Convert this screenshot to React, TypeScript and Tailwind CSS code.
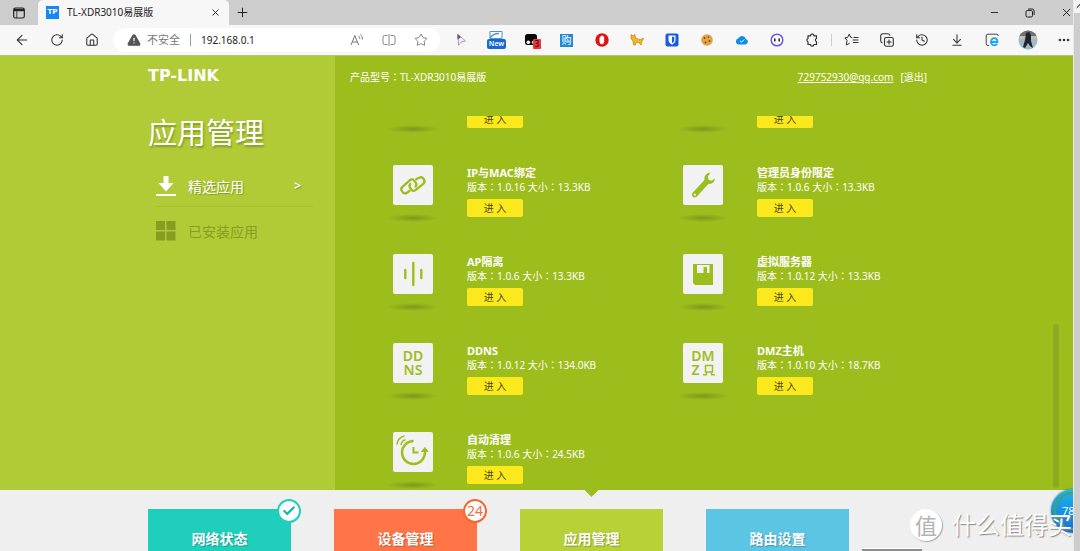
import React from 'react';
import {
  AlertTriangle,
  ArrowDownToLine,
  ArrowLeft,
  Check,
  ChevronUp,
  History,
  House,
  Minus,
  MoreHorizontal,
  Plus,
  RotateCw,
  Star,
  X,
} from 'lucide-react';

interface RouterApp {
  id: string;
  name: string;
  version: string;
  size: string;
  icon: React.ReactNode;
}

interface NavTile {
  id: string;
  label: string;
  color: string;
  active?: boolean;
  badge?: React.ReactNode;
}

const LinkIcon = () => (
  <svg viewBox="0 0 40 40" className="h-10 w-10" fill="none" stroke="#9dbd1d" strokeWidth="2.300" strokeLinecap="round" strokeLinejoin="round">
    <path d="M16.500 26l-2.600 1.800c-1.500 1.100-3.200.8-4.200-.6l-.9-1.300c-1-1.500-.7-3 .6-4.100l7.600-6.600c1.400-1.200 3.100-1 4.200.4l1.500 2c.9 1.300.9 2.700-.1 3.900" />
    <path d="M23.200 14.300l2.900-1.500c1.600-.9 3.300-.6 4.200.8l.8 1.300c.9 1.500.5 3-.9 4l-7.700 6.200c-1.500 1.100-3.100.8-4.200-.6l-1.200-1.700c-.9-1.300-.8-2.600.2-3.800" />
  </svg>
);

const WrenchIcon = () => (
  <svg viewBox="0 0 40 40" className="h-10 w-10">
    <path
      fill="#9dbd1d"
      d="M27.500 7.500c-4 .2-6.800 3.600-6 7.600L9.800 27.500c-1.300 1.400-1.200 3.200 0 4.300 1.200 1.100 3 1 4.200-.3L25.500 18.800c3.200.6 6-1.400 6.300-5.300l-3.300 2.200-3-.9-.6-3.200z"
    />
    <circle cx="11.800" cy="29.600" r="1.200" fill="#f2f2f2" />
  </svg>
);

const IsolationIcon = () => (
  <svg viewBox="0 0 40 40" className="h-10 w-10" stroke="#9dbd1d" strokeWidth="2.400" strokeLinecap="round">
    <path d="M12.300 16v8M20.300 9v22M28.300 16v8" />
  </svg>
);

const FloppyIcon = () => (
  <svg viewBox="0 0 40 40" className="h-10 w-10">
    <path d="M10 10h20v21H12l-2-2z" fill="#9dbd1d" />
    <path d="M14 11h12.500v8H14z" fill="#f2f2f2" />
    <path d="M20.500 13h3.500v6h-3.500z" fill="#9dbd1d" />
  </svg>
);

const CleanIcon = () => (
  <svg viewBox="0 0 40 40" className="h-10 w-10" fill="none" stroke="#9dbd1d" strokeWidth="2.400">
    <path d="M20.500 9a11.500 11.500 0 1 0 11.500 11.500V19" />
    <path d="M28.500 19.500l3.500-4 3 4z" fill="#9dbd1d" strokeWidth="1" />
    <path d="M20.500 15v5.500h5" strokeWidth="2" />
    <path d="M4 12.500c.5-4.500 3-7.500 7.500-8.500M8 13c.4-2.800 2-4.600 4.500-5.200" strokeWidth="1.500" />
  </svg>
);

const apps: RouterApp[] = [
  { id: 'a', name: '', version: '', size: '', icon: null },
  { id: 'b', name: '', version: '', size: '', icon: null },
  { id: 'ipmac', name: 'IP与MAC绑定', version: '1.0.16', size: '13.3KB', icon: <LinkIcon /> },
  { id: 'admin', name: '管理员身份限定', version: '1.0.6', size: '13.3KB', icon: <WrenchIcon /> },
  { id: 'ap', name: 'AP隔离', version: '1.0.6', size: '13.3KB', icon: <IsolationIcon /> },
  { id: 'vserver', name: '虚拟服务器', version: '1.0.12', size: '13.3KB', icon: <FloppyIcon /> },
  {
    id: 'ddns',
    name: 'DDNS',
    version: '1.0.12',
    size: '134.0KB',
    icon: (
      <span className="flex flex-col items-center text-[14px] leading-[14px] font-semibold text-[#9dbd1d]">
        <span>DD</span>
        <span>NS</span>
      </span>
    ),
  },
  {
    id: 'dmz',
    name: 'DMZ主机',
    version: '1.0.10',
    size: '18.7KB',
    icon: (
      <span className="flex flex-col items-center text-[14px] leading-[14px] font-semibold text-[#9dbd1d]">
        <span>DM</span>
        <span className="flex items-center gap-[3px]">
          Z
          <svg viewBox="0 0 12 12" className="h-3 w-3" fill="none" stroke="#9dbd1d" strokeWidth="1.500">
            <path d="M2.500 1.500h7v6.500h-7zM0 10.700h4M8 10.700h4M3.500 8v2.700M8.500 8v2.700" />
          </svg>
        </span>
      </span>
    ),
  },
  { id: 'clean', name: '自动清理', version: '1.0.6', size: '24.5KB', icon: <CleanIcon /> },
];

const tiles: NavTile[] = [
  {
    id: 'network',
    label: '网络状态',
    color: 'bg-[#1fcfbc]',
    badge: (
      <span className="absolute -top-2.5 -right-2.5 flex h-6 w-6 items-center justify-center rounded-full border-2 border-[#1fcfbc] bg-white text-[#1cb9a8]">
        <Check className="h-3.5 w-3.5" strokeWidth={4} />
      </span>
    ),
  },
  {
    id: 'devices',
    label: '设备管理',
    color: 'bg-[#ff7547]',
    badge: (
      <span className="absolute -top-2.5 -right-2.5 flex h-6 w-6 items-center justify-center rounded-full border-2 border-[#f9652f] bg-white text-[14px] leading-none font-normal text-[#f0703f]">
        24
      </span>
    ),
  },
  { id: 'apps', label: '应用管理', color: 'bg-[#b8d137]', active: true },
  { id: 'route', label: '路由设置', color: 'bg-[#5cc5e4]' },
];

// Full-width colon, centred in its cell
const Colon = () => <span className="font-['Noto_Sans_CJK_TC',sans-serif]">：</span>;

const BarButton: React.FC<{ label: string; children: React.ReactNode }> = ({ label, children }) => (
  <button aria-label={label} className="flex h-6 w-[35px] shrink-0 items-center justify-center">
    {children}
  </button>
);

const TabStrip = () => (
  <div className="flex h-[25px] shrink-0 items-center overflow-hidden bg-[#cdcdcd] text-[#222]">
    <button aria-label="标签页操作" className="flex w-[38px] shrink-0 justify-center">
      <svg viewBox="0 0 12 12" className="h-3 w-3" fill="none" stroke="#222" strokeWidth="1.200">
        <rect x=".7" y="1" width="10.600" height="10" rx="1.800" />
        <path d="M1 3h10" strokeWidth="2.400" />
        <path d="M3.800 4v7" strokeWidth=".8" />
      </svg>
    </button>
    <div className="flex h-full w-[191px] items-center rounded-t-[5px] bg-[#f7f7f7] pr-2 pl-2">
      <span className="flex h-[13px] w-[13px] items-center justify-center bg-[#1486fa] font-['DejaVu_Sans',sans-serif] text-[7px] leading-none font-bold text-white">
        TP
      </span>
      <span className="ml-2 flex-1 text-[10px] whitespace-nowrap">TL-XDR3010易展版</span>
      <button aria-label="关闭标签页"><X className="h-[11px] w-[11px]" /></button>
    </div>
    <button aria-label="新建标签页" className="ml-1.5"><Plus className="h-[15px] w-[15px]" strokeWidth={1.600} /></button>
    <div className="ml-auto flex shrink-0 items-center gap-[25px]">
      <button aria-label="最小化"><Minus className="h-[11px] w-[11px]" /></button>
      <button aria-label="还原">
        <svg viewBox="0 0 10 10" className="h-[10px] w-[10px]" fill="none" stroke="#222">
          <rect x="1" y="2.500" width="6.500" height="6.500" rx="1.300" />
          <path d="M3 1h4.200A1.900 1.900 0 0 1 9.100 2.900V7" />
        </svg>
      </button>
      <button aria-label="关闭"><X className="h-[13px] w-[13px]" strokeWidth={1.800} /></button>
    </div>
  </div>
);

const Extensions = () => (
  <>
    <BarButton label="指针">
      <svg viewBox="0 0 14 14" className="h-3.5 w-3.5">
        <path d="M3 1.500l7.500 6.500-4 .6L3.500 12.500z" fill="#f3f3f3" stroke="#a9a4ae" />
        <path d="M2.300 1l3.700 3-3.400 2.700z" fill="#7b3f9d" />
      </svg>
    </BarButton>
    <BarButton label="截图">
      <span className="flex flex-col items-center">
        <svg viewBox="0 0 14 8" className="h-2 w-3.5">
          <path d="M1 .5h12v7H1z" fill="#fff" stroke="#4a97c5" />
          <path d="M1 7c2-3 5-4.500 9-4.500" fill="none" stroke="#4a97c5" strokeWidth="1.500" />
        </svg>
        <span className="rounded-[2px] bg-[#1769d2] px-[2px] text-[7px] leading-[10px] font-semibold text-white">New</span>
      </span>
    </BarButton>
    <BarButton label="脚本管理">
      <span className="relative h-3.5 w-3.5">
        <svg viewBox="0 0 14 14" className="h-3.5 w-3.5">
          <rect x="0" y="1" width="12" height="11" rx="2.500" fill="#0a0a0a" />
          <circle cx="3.300" cy="9.200" r="1.800" fill="#fff" />
          <circle cx="8.700" cy="9.200" r="1.800" fill="#fff" />
        </svg>
        <span className="absolute top-1.5 left-2 rounded-[1px] bg-[#f2353b] px-[2px] text-[8px] leading-[10px] text-black">3</span>
      </span>
    </BarButton>
    <BarButton label="购物">
      <span className="flex h-[13px] w-[13px] items-center justify-center bg-[#2289d8] text-[10px] leading-none text-white">购</span>
    </BarButton>
    <BarButton label="广告拦截">
      <svg viewBox="0 0 14 14" className="h-3.5 w-3.5">
        <circle cx="7" cy="7" r="6.700" fill="#df1212" />
        <path d="M4.500 5c0-1 1-1 1 0V3.500c0-1 1.200-1 1.200 0V3c0-1 1.200-1 1.200 0v1c0-1 1.300-1 1.300 0v4c0 2-1 3.300-2.500 3.300S4.500 10 4.500 8z" fill="#fff" />
      </svg>
    </BarButton>
    <BarButton label="猫">
      <svg viewBox="0 0 14 14" className="h-3.5 w-3.5">
        <path d="M1 1.500l1.300 1h1.400L5 1.500 5.500 5l4.500 1.500 2-.3.500-1.200 1.300.4L12 8l-.5 3.500H10l-.5-2-4 .2V12h-2L3 8.500 1 5.500z" fill="#efb526" stroke="#b97a19" strokeWidth=".6" />
      </svg>
    </BarButton>
    <BarButton label="密码管理">
      <svg viewBox="0 0 14 14" className="h-3.5 w-3.5">
        <rect x=".5" y=".5" width="13" height="13" rx="2" fill="#175ddc" />
        <path d="M3.500 2.500h7v4.500c0 2.300-1.500 3.700-3.500 4.700-2-1-3.500-2.400-3.500-4.700z" fill="#fff" />
        <path d="M7 3.700h2.300V7c0 1.500-1 2.500-2.300 3.200z" fill="#175ddc" />
      </svg>
    </BarButton>
    <BarButton label="Cookie">
      <svg viewBox="0 0 14 14" className="h-3.5 w-3.5">
        <circle cx="7" cy="7" r="5.800" fill="#e5a04a" />
        <g fill="#7b4519">
          <circle cx="4.500" cy="5" r=".9" /><circle cx="8.500" cy="4" r=".8" /><circle cx="9.500" cy="8" r=".9" /><circle cx="5.500" cy="9.500" r=".9" />
        </g>
      </svg>
    </BarButton>
    <BarButton label="云盘">
      <svg viewBox="0 0 14 14" className="h-3.5 w-3.5">
        <path d="M3.500 11.500a3 3 0 0 1-.3-5.900 4 4 0 0 1 7.600.4 2.800 2.800 0 0 1-.3 5.500z" fill="#0c8ee8" />
        <path d="M5 7.800l1.500 1.400 2.700-2.700" fill="none" stroke="#fff" />
      </svg>
    </BarButton>
    <BarButton label="助手">
      <svg viewBox="0 0 14 14" className="h-3.5 w-3.5">
        <circle cx="7" cy="7" r="5.800" fill="#fff" stroke="#6b54f0" strokeWidth="1.500" />
        <path d="M4.800 6v2M9.200 6v2" stroke="#222" strokeWidth="1.500" strokeLinecap="round" />
      </svg>
    </BarButton>
    <BarButton label="扩展">
      <svg viewBox="0 0 14 14" className="h-3.5 w-3.5" fill="none" stroke="#333" strokeWidth="1.200" strokeLinejoin="round">
        <path d="M3 2.800h2.500a1.700 1.700 0 0 1 3.400 0h2.600v2.700a1.700 1.700 0 0 0 0 3.200v2.800H8.900a1.700 1.700 0 0 1-3.400 0H3V8.700a1.700 1.700 0 0 1 0-3.200z" />
      </svg>
    </BarButton>
  </>
);

const Toolbar = () => (
  <div className="flex h-[31px] shrink-0 items-center border-b border-[#b5c574] bg-[#f7f7f7] pl-1 text-[#333]">
    <BarButton label="后退"><ArrowLeft className="h-4 w-4" strokeWidth={1.600} /></BarButton>
    <BarButton label="刷新"><RotateCw className="h-3.5 w-3.5" strokeWidth={1.800} /></BarButton>
    <BarButton label="主页"><House className="h-3.5 w-3.5" strokeWidth={1.800} /></BarButton>
    <div className="mx-1 flex h-6 min-w-0 flex-1 items-center rounded-full bg-white pr-3 pl-3.5 text-[#777]">
      <AlertTriangle className="h-3.5 w-3.5 shrink-0 fill-[#555] stroke-[#555] [&>path:nth-child(n+2)]:stroke-white" />
      <span className="ml-1.5 text-[11px] whitespace-nowrap">不安全</span>
      <span className="mx-2.5 h-3 w-px bg-[#999]" />
      <input aria-label="地址" defaultValue="192.168.0.1" className="w-0 min-w-0 flex-1 bg-transparent text-[10px] text-[#222] outline-none" />
      <div className="flex shrink-0 items-center gap-[18px]">
        <button aria-label="大声朗读">
          <svg viewBox="0 0 14 14" className="h-3.5 w-3.5" fill="none" stroke="#777" strokeWidth="1">
            <path d="M1 12L4.800 2.500 8.600 12M2.300 9h5M8.500 3c1 .8 1.300 1.800 1.200 3M10.300 1.500c1.700 1.300 2.300 3 2 5" />
          </svg>
        </button>
        <button aria-label="分屏">
          <svg viewBox="0 0 14 14" className="h-3.5 w-3.5" fill="none" stroke="#888">
            <path d="M5.500 2.500h-3a1.500 1.500 0 0 0-1.500 1.500v6a1.500 1.500 0 0 0 1.500 1.500h3M8.500 2.500h3A1.500 1.500 0 0 1 13 4v6a1.500 1.500 0 0 1-1.500 1.500h-3M7 1v12" />
          </svg>
        </button>
        <button aria-label="收藏"><Star className="h-3.5 w-3.5" strokeWidth={1.600} /></button>
      </div>
    </div>
    <Extensions />
    <span className="mx-0.5 h-3 w-px shrink-0 bg-[#ccc]" />
    <BarButton label="收藏夹">
      <svg viewBox="0 0 16 14" className="h-3.5 w-4" fill="none" stroke="#333" strokeLinejoin="round">
        <path d="M8.200 4.700L6.800 4.500 5.200 1.200 3.700 4.400.8 4.900l2.200 2.500-.6 4.600 3.300-1.800M9.500 4.500h5M8.500 7h6M9 9.500h5.500" />
      </svg>
    </BarButton>
    <BarButton label="集锦">
      <svg viewBox="0 0 14 14" className="h-3.5 w-3.5" fill="none" stroke="#333" strokeWidth="1.100">
        <rect x="4.500" y="4.500" width="8.800" height="8.800" rx="1.800" />
        <path d="M9 6.500v5M6.500 9h5M2.500 10C1 9.500.7 8.500.7 7.500V3C.7 1.500 1.500.7 3 .7h4.500c1.200 0 2 .4 2.500 1.800" />
      </svg>
    </BarButton>
    <BarButton label="历史记录"><History className="h-3.5 w-3.5" strokeWidth={1.800} /></BarButton>
    <BarButton label="下载"><ArrowDownToLine className="h-3.5 w-3.5" strokeWidth={1.800} /></BarButton>
    <BarButton label="IE 模式">
      <svg viewBox="0 0 14 14" className="h-3.5 w-3.5" fill="none">
        <path d="M4 12.500H3A1.800 1.800 0 0 1 1.200 10.700V3A1.800 1.800 0 0 1 3 1.200h8.500A1.800 1.800 0 0 1 13.300 3" stroke="#444" />
        <path d="M5.500 9h7c0-5-6.500-5-6.500-.2 0 4 4.500 4.500 6 2" stroke="#1ba7ea" strokeWidth="1.800" />
      </svg>
    </BarButton>
    <button aria-label="用户" className="flex w-[38px] shrink-0 justify-center">
      <svg viewBox="0 0 20 20" className="h-5 w-5">
        <defs><clipPath id="face"><circle cx="10" cy="10" r="9.500" /></clipPath></defs>
        <g clipPath="url(#face)">
          <path d="M0 0h20v20H0z" fill="#9db9cf" />
          <path d="M0 0h20v6H0z" fill="#6f7071" />
          <path d="M0 6h20v3H0z" fill="#c8bba8" />
          <path d="M8 3l3-1 2 3v6l2 7-3-2-2-3-3 5-2-1 2-7z" fill="#20242c" />
        </g>
      </svg>
    </button>
    <button aria-label="更多" className="flex w-[26px] shrink-0 justify-end pr-0.5">
      <MoreHorizontal className="h-3.5 w-3.5" strokeWidth={2.500} />
    </button>
  </div>
);

const Sidebar = () => (
  <aside className="w-[335px] shrink-0 bg-[#b0cb35] pr-[22px] pl-[148px] text-white">
    <div className="pt-3 font-['DejaVu_Sans',sans-serif] text-[16px] leading-4 font-bold">TP-LINK</div>
    <h1 className="mt-[29px] text-[29px] leading-10 [text-shadow:1px_2px_2px_#00000040]">应用管理</h1>
    <nav className="mt-[13px] ml-2 text-[14px]">
      <a href="#featured" className="flex h-[41px] items-center border-b border-[#a6c02f] [text-shadow:1px_1px_1px_#00000040]">
        <svg viewBox="0 0 20 20" className="h-5 w-5 fill-white">
          <path d="M7.500 0h5v7h5L10 15.500 2.500 7h5zM0 18h20v2H0z" />
        </svg>
        <span className="ml-3 flex-1">精选应用</span>
        <span className="mr-3 text-[12px] font-semibold">&gt;</span>
      </a>
      <a href="#installed" className="flex h-12 items-center text-[#859e22]">
        <svg viewBox="0 0 20 20" className="h-5 w-5 fill-[#859e22]">
          <path d="M0 0h9v9H0zM10.500 0h9v9h-9zM0 10.500h9v9H0zM10.500 10.500h9v9h-9z" />
        </svg>
        <span className="ml-3">已安装应用</span>
      </a>
    </nav>
  </aside>
);

const AppItem: React.FC<{ app: RouterApp }> = ({ app }) => (
  <article className="flex h-[57px] gap-7">
    <div className="flex w-[52px] shrink-0 flex-col items-center justify-between">
      <div className="flex h-10 w-10 items-center justify-center rounded-[2px] bg-[#f2f2f2]">{app.icon}</div>
      <div className="h-2 w-full bg-[radial-gradient(closest-side,#7d971a,#9dbd1d00)]" />
    </div>
    <div className="pt-px">
      <h2 className="h-[14px] text-[11px] leading-[14px] font-bold whitespace-nowrap">{app.name}</h2>
      <p className="h-[14px] text-[10px] leading-[14px] whitespace-nowrap">
        {app.version && (
          <>
            版本<Colon />{app.version} 大小<Colon />{app.size}
          </>
        )}
      </p>
      <button className="mt-[5px] block h-[18px] w-14 rounded-[2px] bg-[#fce91d] text-[10px] leading-[18px] text-[#4a4410]">进 入</button>
    </div>
  </article>
);

const AppPanel = () => (
  <section className="flex min-w-0 flex-1 flex-col bg-[#9dbd1d] text-white">
    <header className="flex h-[60px] max-w-[592px] shrink-0 items-start justify-between pt-[13px] pl-[15px] text-[10px] leading-4">
      <span>产品型号<Colon />TL-XDR3010易展版</span>
      <span className="flex gap-[7px]">
        <a href="#account" className="underline">729752930@qq.com</a>
        <button className="leading-4">[退出]</button>
      </span>
    </header>
    <div className="flex min-h-0 flex-1 justify-between pr-3.5 pl-[52px]">
      <div className="flex flex-col justify-end overflow-hidden pb-px">
        <div className="grid shrink-0 grid-cols-[290px_250px] gap-y-8">
          {apps.map(app => (
            <AppItem key={app.id} app={app} />
          ))}
        </div>
      </div>
      <div className="mb-0.5 h-[164px] w-1.5 self-end rounded-full bg-[#8dab20]" />
    </div>
  </section>
);

const BottomNav = () => (
  <footer className="h-[61px] shrink-0 bg-[#efefef] pt-[19px] pl-[148px]">
    <nav className="flex gap-[43px]">
      {tiles.map(tile => (
        <a
          key={tile.id}
          href={`#${tile.id}`}
          className={`relative flex h-[58px] w-[143px] shrink-0 items-center justify-center text-[14px] font-bold text-white ${tile.color}`}
        >
          <span className="[text-shadow:1px_1px_1px_#00000040]">{tile.label}</span>
          {tile.badge}
          {tile.active && (
            <span className="absolute -top-[19px] left-1/2 h-[7px] w-3.5 -translate-x-1/2 bg-[#9dbd1d] [clip-path:polygon(0_0,100%_0,50%_100%)]" />
          )}
        </a>
      ))}
    </nav>
  </footer>
);

const Watermark = () => (
  <div className="pointer-events-none absolute right-2 bottom-2.5 flex items-center gap-2.5 text-white">
    <span className="flex h-8 w-8 items-center justify-center rounded-full bg-white text-[22px] leading-none text-[#b4b4b4] shadow-[1px_1px_1px_#aaa]">
      值
    </span>
    <span className="text-[24px] leading-8 [text-shadow:1px_1px_1px_#888]">什么值得买</span>
  </div>
);

const App: React.FC = () => {
  return (
    <div className="relative flex h-screen overflow-hidden font-['Noto_Sans','Noto_Sans_CJK_SC',sans-serif]">
      <div className="relative flex min-w-0 flex-1 flex-col overflow-hidden">
        <TabStrip />
        <Toolbar />
        <main className="flex min-h-0 flex-1">
          <Sidebar />
          <AppPanel />
        </main>
        <BottomNav />
        {/* Floating speed ball */}
        <div className="absolute -right-[22px] bottom-[18px] flex h-11 w-11 items-center rounded-full bg-gradient-to-b from-[#20b5ea] to-[#1670d8] p-[3px] shadow-[0_0_2px_#555]">
          <div className="flex h-full w-full items-center rounded-full border-2 border-[#46a267] pl-1.5 text-[11px] text-white">78</div>
        </div>
        <div className="absolute right-[151px] bottom-0 h-[3px] w-[60px] border-t border-white bg-[#8d8d8d]" />
      </div>
      <div className="w-[7px] shrink-0 overflow-hidden border-l border-[#e8e8e8] bg-[#cdcdcd]">
        <div className="h-[13px] bg-[#f3f3f3]"><ChevronUp className="h-3 w-3" /></div>
      </div>
      <Watermark />
    </div>
  );
};

export default App;
